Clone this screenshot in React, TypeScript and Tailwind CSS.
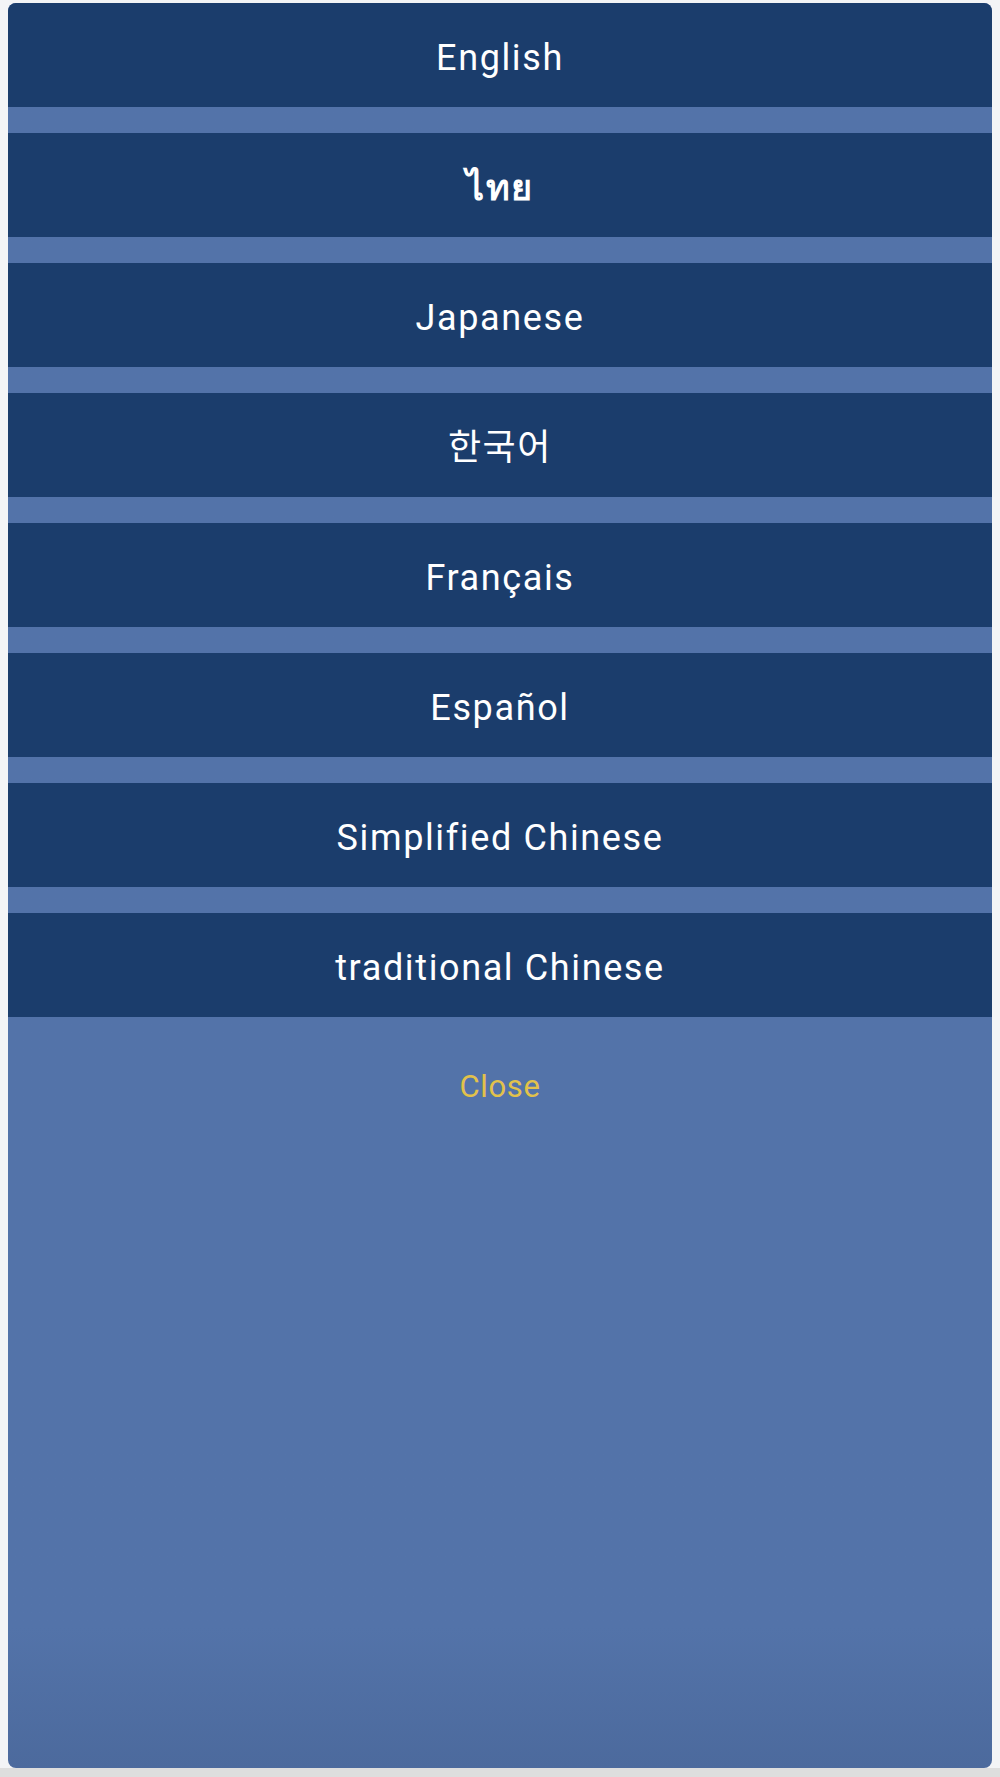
import React from 'react';

const languages = [
  'English',
  'ไทย',
  'Japanese',
  '한국어',
  'Français',
  'Español',
  'Simplified Chinese',
  'traditional Chinese',
];

const fontStack = '"Roboto", "Noto Sans", "Noto Sans CJK KR", sans-serif';

export default function App() {
  return (
    <div
      className="w-[1000px] h-[1777px] bg-[#f3f4f6] px-2 pt-[3px] border-b-[9px] border-[#dedede]"
      style={{ fontFamily: fontStack }}
    >
      {/* 语言选择面板 */}
      <div className="h-full rounded-lg overflow-hidden bg-gradient-to-b from-[#5373a9] from-[92%] to-[#4c6a9d] flex flex-col gap-[26px]">
        {languages.map((lang) => (
          <button
            key={lang}
            className={`h-[104px] w-full shrink-0 bg-[#1b3d6c] text-white text-[36px] tracking-[0.045em] pt-[5px] flex items-center justify-center ${
              lang === 'ไทย' ? 'font-semibold' : ''
            }`}
          >
            {lang}
          </button>
        ))}
        {/* 关闭按钮 */}
        <div className="flex justify-center mt-[24px]">
          <button className="text-[#e2c24b] text-[31px] tracking-[0.02em] leading-[40px]">Close</button>
        </div>
      </div>
    </div>
  );
}
